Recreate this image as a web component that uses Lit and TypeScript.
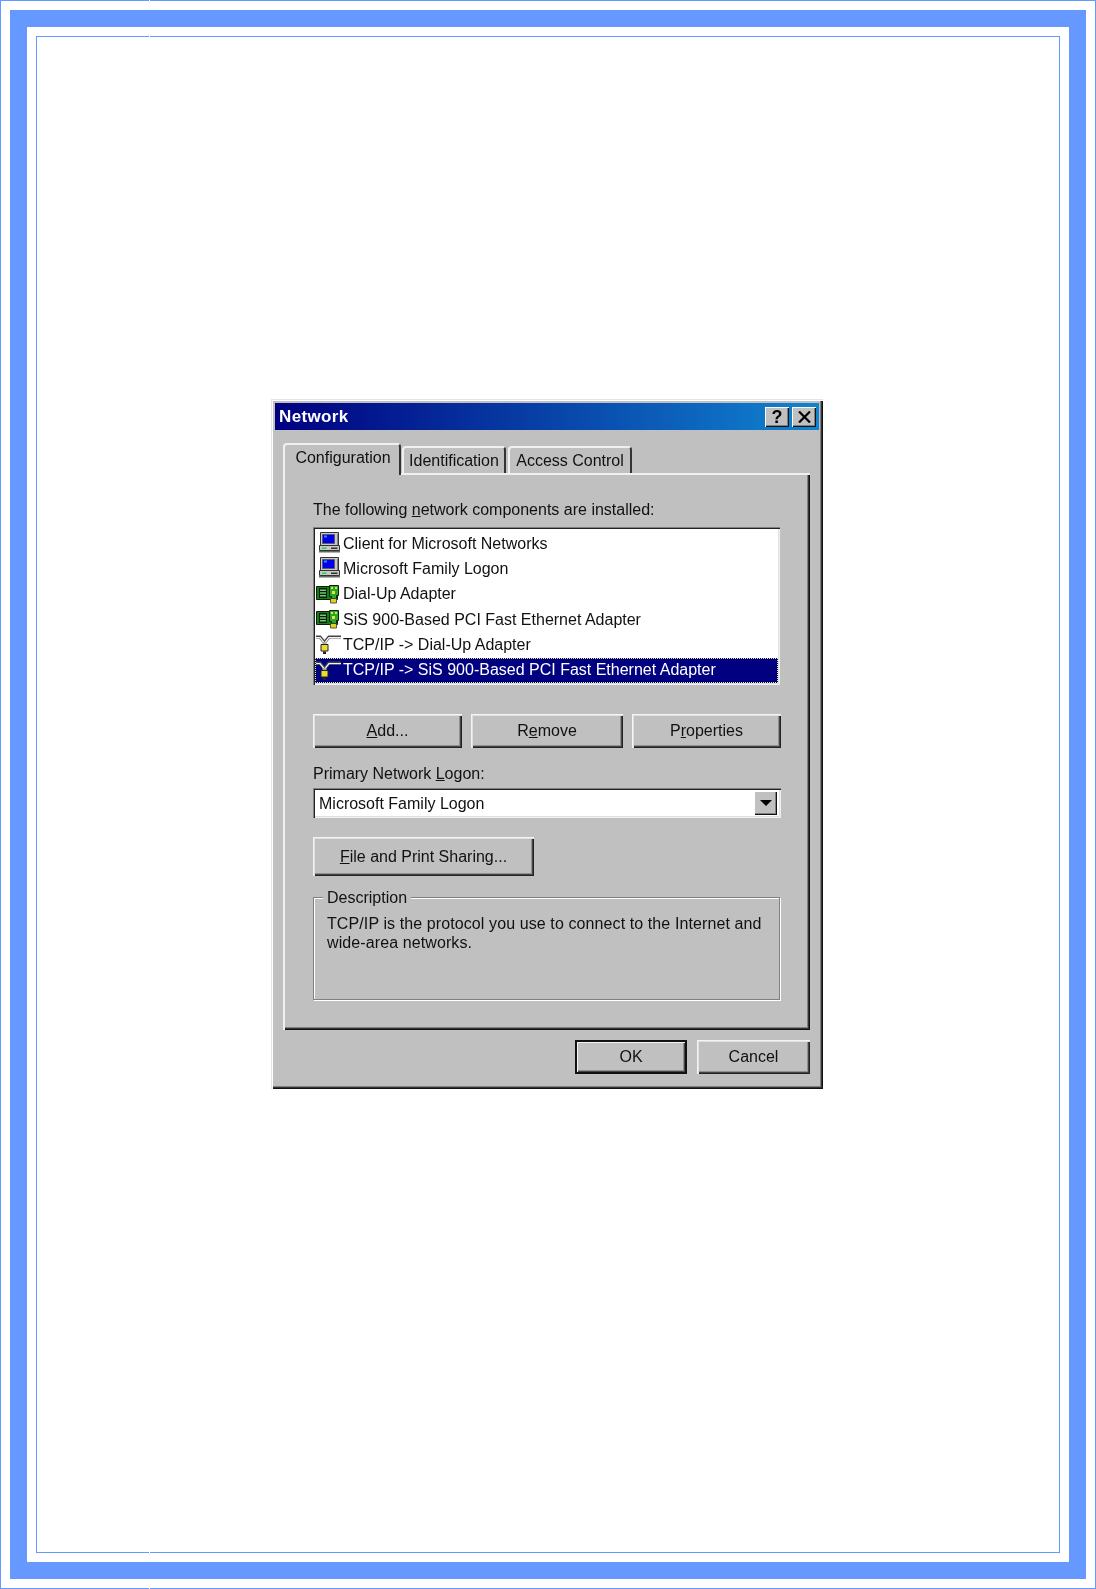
import { LitElement, html, css, svg } from "lit";
import { customElement } from "lit/decorators.js";

const computer = svg`<svg class="ico" viewBox="0 0 26 25">
  <path d="M5.500 1.500h18v13h-18z" fill="#c8c8c8" stroke="#333"/>
  <path d="M22 3h1v11h-1z" fill="#808080"/>
  <path d="M7.500 3.500h12v9h-12z" fill="#0000e8" stroke="#555" stroke-width=".8"/>
  <path d="M9 4.500h3v2H9z" fill="#2090ff"/>
  <path d="M4.500 14.500h20v5h-20z" fill="#c8c8c8" stroke="#333"/>
  <path d="M4 20h21v1.500H4z" fill="#666"/>
  <path d="M7 16.500h4.500V18H7z" fill="#10e040"/>
  <path d="M16 16.500h6.500V18H16z" fill="#333"/>
</svg>`;

const nic = svg`<svg class="ico" viewBox="0 0 26 25">
  <path d="M1.500 4.500h21v13h-21z" fill="#108010" stroke="#0a200a"/>
  <path d="M4 6h8v10H4z" fill="#0c180c"/>
  <path d="M5 7.500h6V9H5zM5 10.200h6v1.500H5zM5 13h6v1.500H5z" fill="#70c870"/>
  <path d="M14.500 3.500h9v10h-2v3h-5v-2h-2z" fill="#28a828" stroke="#0a200a"/>
  <path d="M16 5h2v2h-2zM20 5h2v2h-2zM17 9h3v3h-3z" fill="#ece040"/>
  <path d="M15.500 16.500h6v4.500h-6z" fill="#e0d020" stroke="#333" stroke-width=".8"/>
</svg>`;

const proto = svg`<svg class="ico" viewBox="0 0 26 25">
  <path d="M1 5h4l4.500 5.500L14 5h12" fill="none" stroke="#444" stroke-width="3.200"/>
  <path d="M1 5.600h4l4.500 5.500 4.500-5.500h12" fill="none" stroke="#f4f4f4" stroke-width="1.400"/>
  <path d="M9.500 10v3" fill="none" stroke="#aaa" stroke-width="4"/>
  <path d="M6 12.500h7v6.500H6z" fill="#e8dc30" stroke="#222"/>
  <path d="M8 19.500h3v2.500H8z" fill="#222"/>
</svg>`;

const rows: [any, string][] = [
  [computer, "Client for Microsoft Networks"],
  [computer, "Microsoft Family Logon"],
  [nic, "Dial-Up Adapter"],
  [nic, "SiS 900-Based PCI Fast Ethernet Adapter"],
  [proto, "TCP/IP -> Dial-Up Adapter"],
  [proto, "TCP/IP -> SiS 900-Based PCI Fast Ethernet Adapter"],
];

@customElement("app-root")
export class AppRoot extends LitElement {
  static styles = css`
    :host { display: block; width: 1096px; height: 1589px; background: #fff; position: relative; overflow: hidden; }
    * { box-sizing: border-box; }
    .outer { width: 1096px; height: 1589px; border: 1px solid #6699ff; padding: 9px; }
    .band { height: 100%; border: 17px solid #6699ff; padding: 9px; }
    .inner { height: 100%; border: 1px solid #6699ff; padding: 362px 0 0 234px; }
    .tick { position: absolute; left: 149px; width: 1px; height: 1px; background: #fff; }
    .t1 { top: 0; } .t2 { top: 36px; } .t3 { top: 1552px; } .t4 { top: 1588px; }

    .dialog {
      width: 552px; height: 690px; background: #c0c0c0; padding: 4px;
      font: 16px/20px "Liberation Sans", Arial, sans-serif; color: #111;
      filter: blur(0.5px);
      box-shadow: inset 1px 1px #e4e4e4, inset 2px 2px #fff, inset -1px -1px #111, inset -2px -2px #333, inset -3px -3px #808080;
    }
    .title {
      height: 27px; display: flex; align-items: center; padding: 0 3px 0 4px;
      background: linear-gradient(90deg, #000080, #1084d0);
    }
    .title b { flex: 1; color: #fff; font-size: 17px; letter-spacing: 0.35px; }
    .tb {
      width: 24px; height: 20px; background: #c0c0c0; display: flex; align-items: center; justify-content: center;
      font: bold 18px/20px "Liberation Sans", sans-serif; color: #000;
      box-shadow: inset 1px 1px #fff, inset -1px -1px #111, inset -2px -2px #808080;
    }
    .tb + .tb { margin-left: 3px; }
    .body { padding: 13px 9px 0 8px; }
    .tabs { display: flex; height: 30px; position: relative; z-index: 1; }
    .tab {
      height: 27px; margin-top: 3px; display: flex; align-items: center; justify-content: center;
      background: #c0c0c0; border-radius: 4px 4px 0 0;
      border-top: 2px solid #f0f0f0; border-left: 2px solid #f0f0f0; border-right: 2px solid #333;
      margin-right: 2px;
    }
    .tab.active { height: 32px; margin-top: 0; margin-right: 1px; padding-bottom: 4px; padding-left: 2px; }
    .pane {
      height: 557px; padding: 27px 29px 0 30px; display: flex; flex-direction: column;
      box-shadow: inset 2px 2px #f0f0f0, inset -1px -1px #111, inset -2px -2px #333, inset -3px -3px #808080;
    }
    .lab { height: 20px; }
    .list {
      width: 467px; height: 158px; margin-top: 7px; background: #fff; padding: 4px 2px 0;
      box-shadow: inset 1px 1px #808080, inset 2px 2px #222, inset -1px -1px #f0f0f0, inset -2px -2px #dfdfdf;
    }
    .row { height: 25.33px; display: flex; align-items: center; white-space: nowrap; }
    .ico { flex: none; width: 26px; height: 25px; margin-right: 2px; display: block; }
    .row.sel { background: #000080; color: #fff; outline: 1px dotted #e8e890; outline-offset: -1px; }
    .btns { display: flex; gap: 9px; margin-top: 29px; }
    .btn {
      display: flex; align-items: center; justify-content: center; background: #c0c0c0;
      box-shadow: inset 1px 1px #f4f4f4, inset 2px 2px #e0e0e0, inset -1px -1px #222, inset -2px -2px #444, inset -3px -3px #909090;
    }
    .btn.a { width: 149px; height: 34px; }
    .btn.r { width: 152px; height: 34px; }
    .btn.p { width: 149px; height: 34px; }
    .mid { margin-top: 16px; }
    .combo {
      width: 468px; height: 30px; margin-top: 4px; background: #fff; display: flex; align-items: center;
      padding: 2px 4px 0 6px; justify-content: space-between;
      box-shadow: inset 1px 1px #808080, inset 2px 2px #222, inset -1px -1px #f0f0f0, inset -2px -2px #dfdfdf;
    }
    .drop {
      width: 23px; height: 24px; margin-top: -2px; background: #c0c0c0; display: flex; align-items: center; justify-content: center;
      box-shadow: inset 1px 1px #fff, inset -1px -1px #111, inset -2px -2px #808080;
    }
    .drop i { width: 0; height: 0; border: 6px solid transparent; border-top: 6px solid #000; border-bottom: 0; }
    .btn.f { width: 221px; height: 39px; margin-top: 19px; }
    .group {
      position: relative; width: 467px; height: 103px; margin-top: 21px; padding: 16px 13px 0;
      border: 1px solid #808080; box-shadow: 1px 1px #fff, inset 1px 1px #fff; line-height: 19px; letter-spacing: 0.1px;
    }
    .legend { position: absolute; left: 9px; top: -10px; padding: 0 4px; background: #c0c0c0; line-height: 20px; letter-spacing: 0; }
    .foot { display: flex; justify-content: flex-end; gap: 10px; margin-top: 10px; }
    .btn.ok { width: 112px; height: 34px;
      box-shadow: inset 2px 2px #111, inset -2px -2px #111, inset 3px 3px #f4f4f4, inset -3px -3px #444, inset -4px -4px #909090; }
    .btn.c { width: 113px; height: 34px; }
  `;

  render() {
    return html`
      <div class="outer"><div class="band"><div class="inner">
        <div class="dialog">
          <div class="title">
            <b>Network</b>
            <div class="tb">?</div>
            <div class="tb"><svg width="13" height="12" viewBox="0 0 13 12"><path d="M1 .5l11 11M12 .5l-11 11" stroke="#000" stroke-width="2.200"/></svg></div>
          </div>
          <div class="body">
            <div class="tabs">
              <div class="tab active" style="width:118px">Configuration</div>
              <div class="tab" style="width:104px">Identification</div>
              <div class="tab" style="width:124px">Access Control</div>
            </div>
            <div class="pane">
              <div class="lab">The following <u>n</u>etwork components are installed:</div>
              <div class="list">
                ${rows.map((r, i) => html`<div class="row ${i === 5 ? "sel" : ""}">${r[0]}<span>${r[1]}</span></div>`)}
              </div>
              <div class="btns">
                <div class="btn a"><span><u>A</u>dd...</span></div>
                <div class="btn r"><span>R<u>e</u>move</span></div>
                <div class="btn p"><span>P<u>r</u>operties</span></div>
              </div>
              <div class="lab mid">Primary Network <u>L</u>ogon:</div>
              <div class="combo"><span>Microsoft Family Logon</span><div class="drop"><i></i></div></div>
              <div class="btn f"><span><u>F</u>ile and Print Sharing...</span></div>
              <div class="group">
                <div class="legend">Description</div>
                TCP/IP is the protocol you use to connect to the Internet and<br />wide-area networks.
              </div>
            </div>
            <div class="foot">
              <div class="btn ok">OK</div>
              <div class="btn c">Cancel</div>
            </div>
          </div>
        </div>
      </div></div></div>
      <div class="tick t1"></div><div class="tick t2"></div><div class="tick t3"></div><div class="tick t4"></div>
    `;
  }
}
